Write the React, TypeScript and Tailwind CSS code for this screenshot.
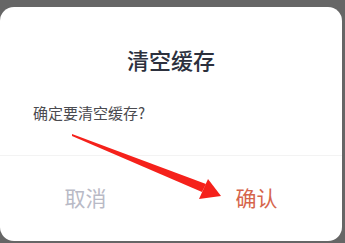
import React from "react";

export default function App() {
  return (
    <div
      className="relative h-[243px] w-[345px] bg-[#666666] pt-[7px] pr-[3px] pb-[2px]"
      style={{ fontFamily: '"Noto Sans CJK SC", "Noto Sans", sans-serif' }}
    >
      <div className="flex h-[234px] w-[342px] flex-col rounded-[14px] bg-white">
        <div className="pt-[37px] text-center text-[22px] leading-[30px] font-medium text-[#2c303d]">
          清空缓存
        </div>
        <div className="mt-[28px] pl-[33px] text-[15px] leading-[22px] text-[#4a4a4f]">
          确定要清空缓存?
        </div>
        <div className="mt-[31px] h-px bg-[#f3f3f3]" />
        <div className="flex flex-1">
          <div className="flex flex-1 items-center justify-center pb-[2px] text-[21px] text-[#b9bac6]">
            取消
          </div>
          <div className="flex flex-1 items-center justify-center pb-[2px] text-[21px] text-[#d6654c]">
            确认
          </div>
        </div>
      </div>
      <svg
        className="pointer-events-none absolute left-0 top-0"
        width="345"
        height="243"
        viewBox="0 0 345 243"
      >
        <polygon points="72,134 206,184 202,192 72,136" fill="#f5211b" />
        <polygon points="208,179 221,196 199,199" fill="#f5211b" />
      </svg>
    </div>
  );
}
